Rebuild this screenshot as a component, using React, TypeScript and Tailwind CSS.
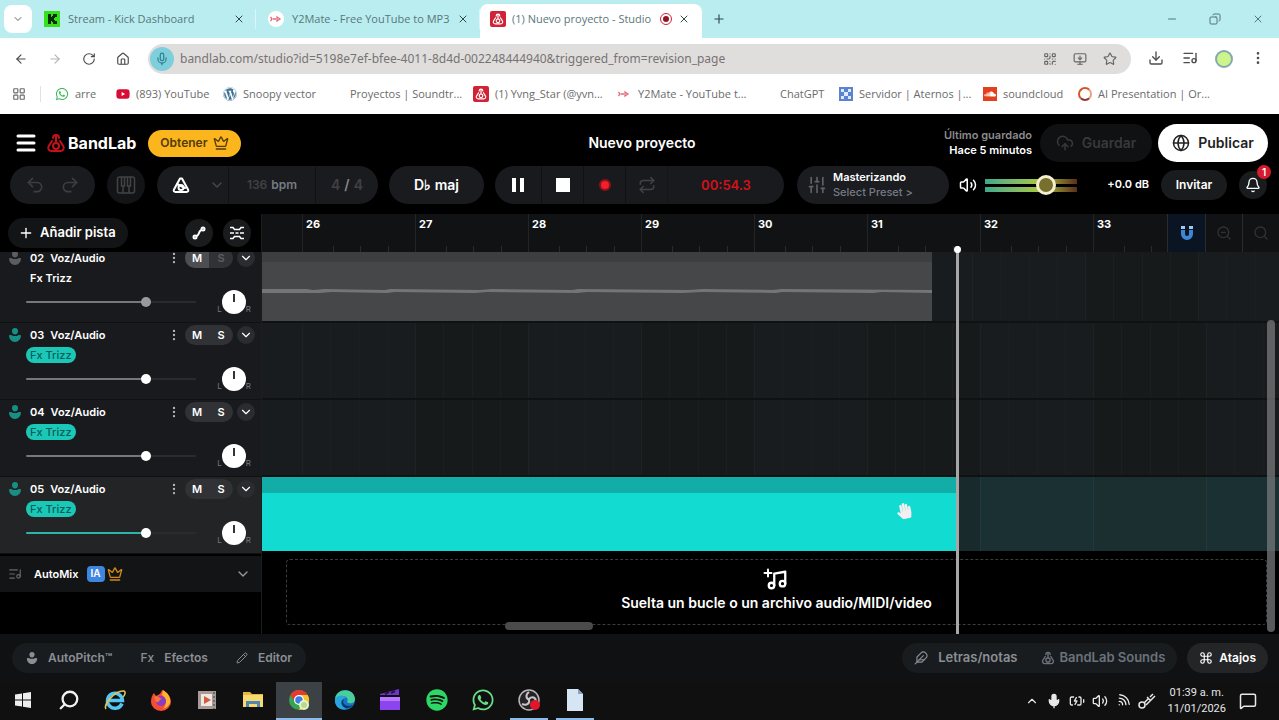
import { useState } from 'react';
import type { ReactNode } from 'react';
import {
  ArrowLeft,
  ArrowRight,
  BatteryCharging,
  Bell,
  ChevronDown,
  ChevronUp,
  CloudUpload,
  Command,
  Copy,
  Crown,
  Download,
  EllipsisVertical,
  Feather,
  Globe,
  House,
  LayoutGrid,
  ListMusic,
  Menu,
  MessageSquare,
  Mic,
  Minus,
  MonitorDown,
  Music,
  Pencil,
  Plus,
  QrCode,
  Redo2,
  Repeat,
  RotateCw,
  Search,
  SlidersVertical,
  Star,
  Undo2,
  Volume2,
  Wifi,
  X,
  ZoomOut,
} from 'lucide-react';
import { FaHandPaper, FaSoundcloud, FaSpotify, FaWhatsapp, FaWordpress, FaYoutube } from 'react-icons/fa';

interface Track {
  id: string;
  muted?: boolean;
  selected?: boolean;
}

const tracks: Track[] = [
  { id: '02', muted: true },
  { id: '03' },
  { id: '04' },
  { id: '05', selected: true },
];

const bars = [26, 27, 28, 29, 30, 31, 32, 33];

function BandLabMark({ className }: { className: string }) {
  return (
    <svg viewBox="0 0 20 20" className={className} fill="none" stroke="currentColor" strokeWidth="2">
      <path d="M6 8 2.500 13.500C1.500 16 3 18 5.500 18h9c2.500 0 4-2 3-4.500L14 8" strokeLinecap="round" />
      <circle cx="10" cy="13" r="3" />
      <path d="M10 10V3.500M7 5c0-4 6-4 6 0" strokeLinecap="round" />
    </svg>
  );
}

function KickIcon() {
  return (
    <svg viewBox="0 0 16 16" className="h-4 w-4 shrink-0">
      <rect width="16" height="16" fill="#35e01c" />
      <path d="M4 3h3v3h1V5h1V3h4v3h-2v1h-1v2h1v1h2v3H9v-2H8v-1H7v3H4z" fill="#082c06" />
    </svg>
  );
}

function Y2Icon() {
  return (
    <svg viewBox="0 0 16 16" className="h-4 w-4 shrink-0">
      <circle cx="8" cy="8" r="8" fill="#fff" />
      <path d="M2.500 6 4 8l-1.500 2M5 8h3M9 6l3 2-3 2z" stroke="#e36b7c" strokeWidth="1.300" fill="none" />
    </svg>
  );
}

function BandLabTile() {
  return (
    <span className="flex h-4 w-4 shrink-0 items-center justify-center rounded-xs bg-[#d12335] text-white">
      <BandLabMark className="h-3 w-3" />
    </span>
  );
}

interface TabProps {
  icon: ReactNode;
  title: string;
  active?: boolean;
}

function BrowserTab({ icon, title, active }: TabProps) {
  return (
    <div
      className={
        active
          ? 'mt-1 flex w-[222px] items-center gap-1.5 self-stretch rounded-t-lg bg-white pr-3 pb-1 pl-2.5'
          : 'flex h-5 w-[224px] items-center gap-2 border-r border-[#d9f6f8] pr-2.5 pl-3'
      }
    >
      {icon}
      <span className="flex-1 text-[11px] leading-4 whitespace-nowrap text-[#59777b]">{title}</span>
      {active && (
        <span className="flex h-3 w-3 shrink-0 items-center justify-center rounded-full border border-[#d12335]">
          <span className="h-1.5 w-1.5 rounded-full bg-[#8e1626]" />
        </span>
      )}
      <button aria-label={`Cerrar ${title}`} className="text-[#33484b]">
        <X className="h-3 w-3" />
      </button>
    </div>
  );
}

function Browser() {
  return (
    <header className="bg-white font-['Open_Sans',sans-serif]">
      <div className="flex h-[38px] items-center bg-[#b9edf0] pl-1">
        <button aria-label="Buscar pestañas" className="flex h-7 w-7 items-center justify-center rounded-lg bg-white text-[#5f6366]">
          <ChevronDown className="h-3 w-3" />
        </button>
        <BrowserTab icon={<KickIcon />} title="Stream - Kick Dashboard" />
        <BrowserTab icon={<Y2Icon />} title="Y2Mate - Free YouTube to MP3" />
        <BrowserTab icon={<BandLabTile />} title="(1) Nuevo proyecto - Studio" active />
        <button aria-label="Nueva pestaña" className="ml-2.5 text-[#33484b]">
          <Plus className="h-3.5 w-3.5" />
        </button>
        <div className="ml-auto flex text-[#53777a]">
          <button aria-label="Minimizar" className="flex w-[43px] justify-center"><Minus className="h-3 w-3" /></button>
          <button aria-label="Restaurar" className="flex w-[43px] justify-center"><Copy className="h-3 w-3 -scale-x-100" /></button>
          <button aria-label="Cerrar" className="flex w-[43px] justify-center"><X className="h-3 w-3" /></button>
        </div>
      </div>

      <div className="flex h-[42px] items-center pr-1 pl-1 text-[#4c4c4c]">
        <button aria-label="Atrás" className="flex w-[34px] justify-center"><ArrowLeft className="h-3.5 w-3.5" /></button>
        <button aria-label="Adelante" className="flex w-[34px] justify-center text-[#b5b5b5]"><ArrowRight className="h-3.5 w-3.5" /></button>
        <button aria-label="Recargar" className="flex w-[34px] justify-center"><RotateCw className="h-3.5 w-3.5" /></button>
        <button aria-label="Inicio" className="flex w-[34px] justify-center"><House className="h-3.5 w-3.5" /></button>
        <div className="ml-2 flex h-[30px] flex-1 items-center rounded-full bg-[#e0dddd] pr-3.5 pl-0.5 text-[#686565]">
          <span className="flex h-6 w-6 items-center justify-center rounded-full bg-[#7dcfdc] text-[#2f7d8c]">
            <Mic className="h-3.5 w-3.5" />
          </span>
          <input
            aria-label="Dirección"
            className="ml-1.5 min-w-0 flex-1 bg-transparent font-['Noto_Sans',sans-serif] text-xs text-[#777373] outline-none"
            defaultValue="bandlab.com/studio?id=5198e7ef-bfee-4011-8d4d-002248444940&triggered_from=revision_page"
          />
          <div className="flex gap-4">
            <QrCode className="h-3.5 w-3.5" />
            <MonitorDown className="h-3.5 w-3.5" />
            <Star className="h-3.5 w-3.5" />
          </div>
        </div>
        <div className="ml-2 flex">
          <button aria-label="Descargas" className="flex w-[34px] justify-center"><Download className="h-4 w-4" /></button>
          <button aria-label="Multimedia" className="flex w-[34px] justify-center"><ListMusic className="h-4 w-4" /></button>
          <button aria-label="Perfil" className="flex w-[34px] justify-center">
            <span className="h-[18px] w-[18px] rounded-full border-2 border-[#83a8b0] bg-[#cdf58c]" />
          </button>
          <button aria-label="Más" className="flex w-[34px] justify-center"><EllipsisVertical className="h-4 w-4" /></button>
        </div>
      </div>

      <nav className="flex h-[34px] items-center pb-1.5 pl-3 text-[11px] whitespace-nowrap text-[#6b6b6b]">
        <LayoutGrid className="h-3.5 w-3.5" />
        <span className="mr-3.5 ml-3.5 h-4 w-px bg-[#e2e2e2]" />
        <a href="#arre" className="flex w-[61px] items-center gap-1.5"><FaWhatsapp className="h-3.5 w-3.5 text-[#38b957]" />arre</a>
        <a href="#youtube" className="flex w-[107px] items-center gap-1.5"><FaYoutube className="h-3.5 w-3.5 text-[#d60b36]" />(893) YouTube</a>
        <a href="#snoopy" className="flex w-[107px] items-center gap-1.5"><FaWordpress className="h-3.5 w-3.5 text-[#3d7393]" />Snoopy vector</a>
        <a href="#proyectos" className="flex w-[143px] items-center pl-5">Proyectos | Soundtr...</a>
        <a href="#yvng" className="flex w-[143px] items-center gap-1.5"><BandLabTile />(1) Yvng_Star (@yvn...</a>
        <a href="#y2mate" className="flex w-[144px] items-center gap-1.5"><Y2Icon />Y2Mate - YouTube t...</a>
        <a href="#chatgpt" className="flex w-[79px] items-center pl-5">ChatGPT</a>
        <a href="#aternos" className="flex w-[144px] items-center gap-1.5">
          <svg viewBox="0 0 14 14" className="h-3.5 w-3.5 shrink-0">
            <rect width="14" height="14" fill="#5b83d3" />
            <path d="M2 2h3v3H2zM9 2h3v3H9zM5 5h4v4H5zM2 9h3v3H2zM9 9h3v3H9z" fill="#dfe9ff" />
          </svg>
          Servidor | Aternos |...
        </a>
        <a href="#soundcloud" className="flex w-[95px] items-center gap-1.5">
          <span className="flex h-3.5 w-3.5 items-center justify-center bg-[#e5401d] text-white"><FaSoundcloud className="h-3 w-3" /></span>
          soundcloud
        </a>
        <a href="#ai" className="flex items-center gap-1.5">
          <span className="h-3.5 w-3.5 rounded-full border-2 border-[#d8532c] border-r-[#e9a07c] border-b-[#8b3a34]" />
          AI Presentation | Or...
        </a>
      </nav>
    </header>
  );
}

function StudioHeader() {
  return (
    <div className="flex items-center justify-between pt-2.5 pr-[11px] pl-4">
      <div className="flex flex-1 items-center">
        <button aria-label="Menú"><Menu className="-ml-0.5 h-6 w-6" strokeWidth={3} /></button>
        <BandLabMark className="ml-2 h-5 w-5 text-[#c4111c]" />
        <span className="ml-0.5 text-base font-bold">BandLab</span>
        <button className="ml-3 flex h-[27px] items-center gap-1.5 rounded-full bg-[#fab61c] px-3 text-xs font-semibold text-[#553b08]">
          Obtener <Crown className="h-4 w-4" />
        </button>
      </div>
      <h1 className="text-sm font-semibold">Nuevo proyecto</h1>
      <div className="flex flex-1 items-center justify-end">
        <p className="mr-2 text-right text-[11px] leading-[15px] font-semibold">
          <span className="block text-[#8a8a8d]">Último guardado</span>
          Hace 5 minutos
        </p>
        <button disabled className="flex h-[38px] w-28 items-center justify-center gap-2 rounded-full bg-[#101112] text-sm font-semibold text-[#37393c]">
          <CloudUpload className="h-[18px] w-[18px]" /> Guardar
        </button>
        <button className="ml-1.5 flex h-[38px] w-[110px] items-center justify-center gap-2 rounded-full bg-white text-sm font-semibold text-[#222]">
          <Globe className="h-[18px] w-[18px]" /> Publicar
        </button>
      </div>
    </div>
  );
}

function MetronomeIcon() {
  return (
    <svg viewBox="0 0 20 20" className="h-5 w-5" fill="none" stroke="currentColor" strokeWidth="2" strokeLinejoin="round" strokeLinecap="round">
      <path d="M9 3.500h2l6 11c.8 1.500 0 2.500-1.500 2.500h-11C3 17 2.200 16 3 14.500z" />
      <circle cx="10" cy="12.500" r="2.500" />
      <path d="m6 9 8 4" />
    </svg>
  );
}

function Transport() {
  const [volume, setVolume] = useState(71);

  return (
    <div className="flex items-center pt-1 pr-3 pb-2.5 pl-2.5 text-sm font-semibold">
      <div className="flex h-[38px] w-[85px] items-center justify-around rounded-full bg-[#191b1e] px-2 text-[#3c3e42]">
        <button aria-label="Deshacer"><Undo2 className="h-5 w-5" /></button>
        <button aria-label="Rehacer"><Redo2 className="h-5 w-5" /></button>
      </div>
      <button aria-label="Teclado" className="ml-3 flex h-[38px] w-[38px] items-center justify-center rounded-full bg-[#131416] text-[#414347]">
        <svg viewBox="0 0 20 20" className="h-5 w-5" fill="none" stroke="currentColor" strokeWidth="1.500">
          <rect x="1.500" y="2" width="17" height="16" rx="2" />
          <path d="M7 11v7M13 11v7" />
          <path d="M5.500 2v9h3V2M11.500 2v9h3V2" />
        </svg>
      </button>
      <div className="ml-3 flex h-[38px] w-[221px] items-center rounded-full bg-[#1a1b1e]">
        <button aria-label="Metrónomo" className="flex w-12 justify-center"><MetronomeIcon /></button>
        <button aria-label="Opciones del metrónomo" className="flex w-[23px] justify-center text-[#46484c]"><ChevronDown className="h-4 w-4" /></button>
        <div className="flex h-full flex-1 items-center justify-center gap-1 border-x border-[#101113] text-xs text-[#3f4145]">
          136 <span className="text-[#777b84]">bpm</span>
        </div>
        <div className="flex w-[62px] items-center justify-center gap-1 text-[#3f4145]">
          4 <span className="text-[#85868a]">/</span> 4
        </div>
      </div>
      <button className="ml-[11px] h-[38px] w-[95px] rounded-full bg-[#191b1e]">D♭ maj</button>
      <div className="ml-[11px] flex h-[38px] w-[289px] items-center rounded-full bg-[#191a1d]">
        <button aria-label="Pausa" className="flex h-full w-[47px] items-center justify-center gap-1 border-r border-[#101113]">
          <span className="h-3.5 w-1 bg-white" />
          <span className="h-3.5 w-1 bg-white" />
        </button>
        <button aria-label="Detener" className="flex h-full w-[42px] items-center justify-center border-r border-[#101113]"><span className="h-3.5 w-3.5 bg-white" /></button>
        <button aria-label="Grabar" className="flex h-full w-[42px] items-center justify-center border-r border-[#101113]">
          <span className="h-3 w-3 rounded-full border-2 border-[#8e1119] bg-[#ef1f2b]" />
        </button>
        <button aria-label="Bucle" className="flex h-full w-[42px] items-center justify-center border-r border-[#141517] text-[#414347]"><Repeat className="h-[18px] w-[18px]" /></button>
        <span className="flex-1 text-center text-[13px] text-[#d4101b]">00:54.3</span>
      </div>
      <button className="ml-[13px] flex h-[38px] w-[152px] items-center gap-1.5 rounded-full bg-[#1b1c20] pl-2.5 text-left text-[11px] leading-[15px]">
        <SlidersVertical className="h-5 w-5 text-[#5e6066]" />
        <span>
          Masterizando
          <span className="block font-medium text-[#777a82]">Select Preset &gt;</span>
        </span>
      </button>
      <Volume2 className="ml-2.5 h-[18px] w-[18px]" />
      <div className="relative ml-2 flex w-[92px] flex-col gap-[3px]">
        <span className="h-[5px] bg-linear-to-r from-[#3aa98a] via-[#a9c736] via-60% to-[#59301a]" />
        <span className="h-[5px] bg-linear-to-r from-[#3aa98a] via-[#a9c736] via-60% to-[#59301a]" />
        <input
          type="range"
          aria-label="Volumen principal"
          value={volume}
          onChange={(e) => setVolume(Number(e.target.value))}
          className="absolute inset-0 m-auto h-5 w-full appearance-none bg-transparent [&::-webkit-slider-thumb]:h-5 [&::-webkit-slider-thumb]:w-5 [&::-webkit-slider-thumb]:appearance-none [&::-webkit-slider-thumb]:rounded-full [&::-webkit-slider-thumb]:border-[3px] [&::-webkit-slider-thumb]:border-[#f5efd0] [&::-webkit-slider-thumb]:bg-[#77702c]"
        />
      </div>
      <span className="ml-auto text-[11px]">+0.0 dB</span>
      <button className="ml-3 h-[30px] w-[66px] rounded-full bg-[#191b1d] text-xs">Invitar</button>
      <button aria-label="Notificaciones" className="relative ml-3 flex h-7 w-7 items-center justify-center rounded-full bg-[#191b1d]">
        <Bell className="h-4 w-4" />
        <span className="absolute -top-1.5 -right-1 flex h-3.5 w-3.5 items-center justify-center rounded-full bg-[#d51c2e] text-[10px]">1</span>
      </button>
    </div>
  );
}

function VoiceIcon({ className }: { className: string }) {
  return (
    <svg viewBox="0 0 14 14" className={className} fill="currentColor">
      <path d="M7 0c2 0 3 1.300 3 3S9 6.500 7 6.500 4 5 4 3s1-3 3-3z" />
      <path d="M1 7.500c1.500-.8 3-.5 4 .5h4c1-1 2.500-1.300 4-.5C13 11 10.500 14 7 14S1 11 1 7.500z" />
    </svg>
  );
}

function TrackRow({ track }: { track: Track }) {
  const [level, setLevel] = useState(72);
  const fill = track.selected ? '#2cb5a8' : '#77787a';

  return (
    <li
      className={`flex flex-col justify-end overflow-hidden border-b border-[#0f1011] ${track.selected ? 'bg-[#222426]' : 'bg-[#191a1d]'} ${track.muted ? 'h-[71px]' : 'h-[77px]'}`}
    >
      <div className="flex h-[76px] shrink-0 flex-col pr-1.5 pl-2">
        <div className="flex h-6 items-center text-[11px] font-semibold">
          <VoiceIcon className={track.muted ? 'h-3.5 w-3.5 text-[#5b5d60]' : 'h-3.5 w-3.5 text-[#178f84]'} />
          <span className="ml-2">{track.id}</span>
          <span className="ml-1.5">Voz/Audio</span>
          <button aria-label={`Opciones de la pista ${track.id}`} className="ml-auto text-[#b5b6b8]"><EllipsisVertical className="h-3.5 w-3.5" /></button>
          <div className="ml-1 flex h-5 w-12 overflow-hidden rounded-full bg-[#303235]">
            <button aria-label={`Silenciar pista ${track.id}`} className={track.muted ? 'flex-1 bg-[#4c4e51]' : 'flex-1'}>M</button>
            <button aria-label={`Solo pista ${track.id}`} className={track.muted ? 'flex-1 text-[#5c5e61]' : 'flex-1'}>S</button>
          </div>
          <button aria-label={`Expandir pista ${track.id}`} className="ml-1 flex h-[18px] w-[18px] items-center justify-center rounded-full bg-[#2a2c2f]">
            <ChevronDown className="h-3.5 w-3.5" />
          </button>
        </div>
        <button
          className={
            track.muted
              ? 'ml-[22px] h-4 self-start text-[11px] leading-4 font-semibold'
              : 'ml-[18px] h-4 self-start rounded-full bg-[#1bc8b8] px-1 text-[11px] leading-4 font-medium text-[#075e57]'
          }
        >
          Fx Trizz
        </button>
        <div className="mt-1 flex h-6 items-center">
          <input
            type="range"
            aria-label={`Volumen pista ${track.id}`}
            value={level}
            onChange={(e) => setLevel(Number(e.target.value))}
            style={{ backgroundImage: `linear-gradient(to right, ${fill} ${level}%, #292b2e ${level}%)` }}
            className={`ml-[18px] h-0.5 w-[170px] appearance-none rounded-full [&::-webkit-slider-thumb]:h-2.5 [&::-webkit-slider-thumb]:w-2.5 [&::-webkit-slider-thumb]:appearance-none [&::-webkit-slider-thumb]:rounded-full ${track.muted ? '[&::-webkit-slider-thumb]:bg-[#999a9c]' : '[&::-webkit-slider-thumb]:bg-white'}`}
          />
          <div className="mr-1 ml-auto flex items-end text-[8px] leading-[10px] text-[#77797c]">
            L
            <button aria-label={`Panorama pista ${track.id}`} className="flex h-6 w-6 justify-center rounded-full bg-white pt-1">
              <span className="h-2 w-0.5 bg-[#333]" />
            </button>
            R
          </div>
        </div>
      </div>
    </li>
  );
}

function TrackPanel() {
  return (
    <aside className="flex w-[262px] shrink-0 flex-col border-r border-[#1c1d1f]">
      <div className="flex h-[38px] items-center pr-2.5 pl-2">
        <button className="flex h-[30px] w-[120px] items-center gap-1.5 rounded-full bg-[#131415] pl-2.5 text-[13px] font-semibold whitespace-nowrap">
          <Plus className="h-4 w-4" /> Añadir pista
        </button>
        <button aria-label="Automatización" className="ml-auto flex h-7 w-7 items-center justify-center rounded-full bg-[#1a1b1d]">
          <svg viewBox="0 0 16 16" className="h-4 w-4" fill="none" stroke="currentColor" strokeWidth="2">
            <circle cx="4" cy="12" r="1.500" />
            <circle cx="12" cy="4" r="1.500" />
            <path d="M5 11c4 0 2-6 6-6" />
          </svg>
        </button>
        <button aria-label="Ajustar pistas" className="ml-2.5 flex h-7 w-7 items-center justify-center rounded-full bg-[#1a1b1d]">
          <svg viewBox="0 0 16 16" className="h-4 w-4" fill="none" stroke="currentColor" strokeWidth="1.500">
            <path d="M1 2.500h3l1.500 2h5l1.500-2h3M1 13.500h3l1.500-2h5l1.500 2h3M1 8h4M11 8h4M6.500 8h3" />
          </svg>
        </button>
      </div>
      <ul>
        {tracks.map((track) => (
          <TrackRow key={track.id} track={track} />
        ))}
      </ul>
      <div className="mt-0.5 flex h-[36px] items-center bg-[#131415] pr-2.5 pl-2 text-xs font-semibold">
        <ListMusic className="h-3.5 w-3.5 text-[#66686b]" />
        <span className="ml-3 text-[11px]">AutoMix</span>
        <span className="ml-2 flex h-4 w-[18px] items-center justify-center rounded-sm bg-[#3f86e0] text-[10px]">IA</span>
        <Crown className="ml-0.5 h-4 w-4 text-[#d18a15]" />
        <button aria-label="Expandir AutoMix" className="ml-auto text-[#98999b]"><ChevronDown className="h-4 w-4" /></button>
      </div>
    </aside>
  );
}

function Ruler() {
  return (
    <div className="flex h-[38px] bg-[#101214]">
      <div className="flex min-w-0 flex-1 overflow-hidden">
        <span className="w-10 shrink-0" />
        {bars.map((bar) => (
          <div key={bar} className="flex w-[113px] shrink-0 flex-col justify-between border-l border-[#222426] pt-[3px] pl-[3px]">
            <span className="text-[11px] leading-[14px] font-bold">{bar}</span>
            <span className="flex h-1.5 justify-evenly">
              <span className="w-px bg-[#282a2c]" />
              <span className="w-px bg-[#282a2c]" />
              <span className="w-px bg-[#282a2c]" />
            </span>
          </div>
        ))}
      </div>
      <button aria-label="Ajustar a la cuadrícula" className="flex w-[38px] items-center justify-center border-l border-[#292b2d] bg-[#0b1423] text-[#3d86d4]">
        <svg viewBox="0 0 16 16" className="h-4 w-4" fill="none" stroke="currentColor" strokeWidth="4">
          <path d="M4 5v4a4 4 0 0 0 8 0V5" />
          <path d="M4 1v3M12 1v3" stroke="#9cc8f2" />
        </svg>
      </button>
      <button aria-label="Alejar" className="flex w-[37px] items-center justify-center border-l border-[#292b2d] text-[#303235]"><ZoomOut className="h-4 w-4" /></button>
      <button aria-label="Acercar" className="flex w-[37px] items-center justify-center border-l border-[#292b2d] text-[#303235]"><Search className="h-4 w-4" /></button>
    </div>
  );
}

function Grid() {
  return (
    <div className="flex h-full min-w-0 flex-1 overflow-hidden bg-[#181b1c]">
      <span className="w-10 shrink-0 bg-[#191c1e]" />
      {[...bars, 34].map((bar) => (
        <div key={bar} className={bar % 2 ? 'flex w-[113px] shrink-0 justify-evenly border-l border-[#1f2224] bg-[#161a1a]' : 'flex w-[113px] shrink-0 justify-evenly border-l border-[#1f2224] bg-[#191c1e]'}>
          <span className="w-px bg-[#1c1f21]" />
          <span className="w-px bg-[#1c1f21]" />
          <span className="w-px bg-[#1c1f21]" />
        </div>
      ))}
    </div>
  );
}

function Timeline() {
  return (
    <section aria-label="Línea de tiempo" className="relative flex min-w-0 flex-1 flex-col">
      <Ruler />
      <div className="flex h-[71px] border-b-2 border-[#0f1112]">
        <div className="flex w-[670px] shrink-0 flex-col bg-[#464748]">
          <span className="h-2.5 bg-[#3d3e3f]" />
          <svg viewBox="0 0 670 58" preserveAspectRatio="none" className="h-[58px] w-full">
            <path d="M0 27h45l6 1 12-1 60 1 5-1 90 1 12-1 80 1 6-1 110 1 15-1 70 1 8-1 151 1v3l-50-1-9 1-91-1-6 1-74-1-20 1-95-1-10 1-90-1-12 1-80-1-8 1-55-1-13 1H0z" fill="#747576" />
          </svg>
        </div>
        <Grid />
      </div>
      <div className="flex h-[77px] border-b-2 border-[#0f1112]"><Grid /></div>
      <div className="flex h-[77px] border-b-2 border-[#0f1112]"><Grid /></div>
      <div className="flex h-[74px] bg-[#1a3032]">
        <div className="flex w-[696px] shrink-0 flex-col bg-[#12dcd2]">
          <span className="h-4 bg-[#12ada7]" />
        </div>
        <div className="flex flex-1 overflow-hidden">
          <span className="w-[23px] shrink-0 border-r border-[#20393b] bg-[#192a2d]" />
          <span className="w-[113px] shrink-0 border-r border-[#20393b]" />
          <span className="w-[113px] shrink-0 border-r border-[#20393b] bg-[#1b2f31]" />
        </div>
      </div>
      <div className="mt-2 mr-3 ml-6 flex h-[66px] flex-col items-center justify-center rounded-sm border border-dashed border-[#3e3b3b] text-sm font-semibold">
        <span className="relative">
          <Music className="h-[22px] w-[22px]" strokeWidth={2.5} />
          <Plus className="absolute -top-0.5 -left-1 h-3 w-3" strokeWidth={4} />
        </span>
        <p className="leading-6">Suelta un bucle o un archivo audio/MIDI/video</p>
      </div>
      <span className="absolute bottom-1 left-[243px] h-2 w-[88px] rounded-sm bg-[#4b4b4b]" />
      <span className="absolute top-8 bottom-0 left-[694px] w-[3px] bg-[#a7a7a7]" />
      <span className="absolute top-8 left-[692px] h-[7px] w-[7px] rounded-full bg-white" />
      <span className="absolute top-[106px] right-1 bottom-0.5 w-2 rounded-full bg-[#77787a]/75" />
      <FaHandPaper className="absolute top-[289px] left-[634px] h-4 w-4 -rotate-12 text-[#f4eef2]" />
    </section>
  );
}

function BottomBar() {
  return (
    <div className="flex h-12 items-center justify-between bg-[#0f1112] pr-[11px] pl-3 text-xs font-semibold text-[#8b8e94]">
      <div className="flex h-[30px] items-center gap-7 rounded-full bg-[#191c1f] px-3.5">
        <button className="flex items-center gap-2.5"><VoiceIcon className="h-3 w-3" />AutoPitch™</button>
        <button className="flex items-center gap-2.5"><span className="font-medium">Fx</span>Efectos</button>
        <button className="flex items-center gap-2.5"><Pencil className="h-3 w-3" />Editor</button>
      </div>
      <div className="flex items-center gap-2.5">
        <div className="flex h-[30px] items-center gap-6 rounded-full bg-[#191c1f] px-3 text-[13px]">
          <button className="flex items-center gap-2.5"><Feather className="h-3.5 w-3.5" />Letras/notas</button>
          <button className="flex items-center gap-1 text-[#6b727b]">
            <BandLabMark className="h-3.5 w-3.5" />BandLab Sounds
          </button>
        </div>
        <button className="flex h-[30px] items-center gap-1.5 rounded-full bg-[#232527] px-3 text-white">
          <Command className="h-3.5 w-3.5" />Atajos
        </button>
      </div>
    </div>
  );
}

const apps: { name: string; icon: ReactNode; running?: boolean; active?: boolean }[] = [
  {
    name: 'Inicio',
    icon: <svg viewBox="0 0 16 16" className="h-4 w-4" fill="#ededed"><path d="M0 2.500 7 1.500v6H0zM8 1.300 16 0v7.500H8zM0 8.500h7v6l-7-1zM8 8.500h8V16l-8-1.300z" /></svg>,
  },
  { name: 'Buscar', icon: <Search className="h-[22px] w-[22px] -scale-x-100 text-[#f1f1f1]" strokeWidth={2.5} /> },
  {
    name: 'Internet Explorer',
    icon: (
      <svg viewBox="0 0 24 24" className="h-6 w-6" fill="none">
        <path d="M19 15.500a7.500 7.500 0 1 1 .5-3H6" stroke="#53c6f5" strokeWidth="3.500" />
        <path d="M3 21C0 17 12 2 21 3c2 1 1 4-1 6" stroke="#e4c552" strokeWidth="1.500" />
      </svg>
    ),
  },
  {
    name: 'Firefox',
    icon: (
      <svg viewBox="0 0 24 24" className="h-6 w-6">
        <path d="M13 2c4 2 9 6 9 12a10 9 0 0 1-20 0c0-4 1-7 3-9l2 3c2-1 5-2 6-6z" fill="#f64b35" />
        <path d="M14 2c5 3 8 7 7 13-1 3-4 5-7 6 4-5 4-10-1-14z" fill="#fdb52e" />
        <circle cx="12" cy="13" r="5" fill="#8a3cc4" />
        <path d="M5 9c3-2 5 1 8 2-3 0-2 4-6 3z" fill="#fa7636" />
      </svg>
    ),
  },
  {
    name: 'Reproductor',
    icon: (
      <svg viewBox="0 0 20 20" className="h-5 w-5">
        <rect x="1" y="1" width="18" height="18" fill="#a89a96" />
        <path d="M17 2v17" stroke="#66707c" strokeDasharray="2 2" strokeWidth="2" />
        <rect x="4" y="4" width="11" height="12" fill="#f0e6e2" />
        <path d="m7 6 7 4-7 4z" fill="#d45b3c" />
      </svg>
    ),
  },
  {
    name: 'Explorador de archivos',
    icon: (
      <svg viewBox="0 0 22 20" className="h-5 w-[22px]">
        <path d="M1 2h7l2 2h11v13H1z" fill="#e3b742" />
        <path d="M1 5h20v12H1z" fill="#f7db70" />
        <path d="M4 17v-6h14v6h-3v-3H7v3z" fill="#5186b0" />
      </svg>
    ),
  },
  {
    name: 'Chrome',
    active: true,
    icon: (
      <svg viewBox="0 0 24 24" className="h-6 w-6">
        <circle cx="12" cy="12" r="10" fill="#35a552" />
        <path d="M3.300 7A10 10 0 0 1 20.700 7H12L8 14z" fill="#e23b32" />
        <path d="M20.700 7A10 10 0 0 1 12 22l4-9-4-6z" fill="#f6c42c" />
        <circle cx="12" cy="12" r="5" fill="#fff" />
        <circle cx="12" cy="12" r="3.800" fill="#3c7fe3" />
        <circle cx="17" cy="17" r="5" fill="#e8f2cc" />
        <circle cx="17" cy="17" r="3" fill="#b7d989" />
      </svg>
    ),
  },
  {
    name: 'Edge',
    icon: (
      <svg viewBox="0 0 24 24" className="h-6 w-6">
        <circle cx="12" cy="12" r="10" fill="#1673c5" />
        <path d="M2 11C3 0 21-1 22 11c0 5-6 5-8 3 3-5-5-9-12-3z" fill="#48cf9c" />
        <path d="M2 11c3-5 10-4 11-1-5 0-6 8 0 11C6 23 1 17 2 11z" fill="#28a6dc" />
        <path d="M11 11c-3 4 2 9 9 6-3 4-9 4-11 0-1-2-1-5 2-6z" fill="#0b3768" />
      </svg>
    ),
  },
  {
    name: 'Editor de video',
    icon: (
      <svg viewBox="0 0 22 22" className="h-[22px] w-[22px]">
        <path d="M0 5 19 0v6H0z" fill="#6f35c9" />
        <path d="m5 5 4-2M11 4l4-2" stroke="#27144e" strokeWidth="2" />
        <path d="M0 8h20v13H0z" fill="#8c44ee" />
        <path d="M0 8h20v4H0z" fill="#b679ff" />
      </svg>
    ),
  },
  { name: 'Spotify', icon: <FaSpotify className="h-[22px] w-[22px] text-[#2bd865]" /> },
  { name: 'WhatsApp', icon: <FaWhatsapp className="h-6 w-6 text-[#68df86]" /> },
  {
    name: 'OBS Studio',
    running: true,
    icon: (
      <svg viewBox="0 0 24 24" className="h-6 w-6">
        <circle cx="12" cy="12" r="10" fill="#252326" stroke="#b9b5b9" strokeWidth="1.500" />
        <path d="M12 4c-4 3-3 7 1 8M5 16c5 2 8-1 7-4M19 14c0-5-4-6-7-3" stroke="#c9c6c9" strokeWidth="2" fill="none" />
        <circle cx="18" cy="17" r="5" fill="#e2162a" />
      </svg>
    ),
  },
  {
    name: 'Bloc de notas',
    running: true,
    icon: (
      <svg viewBox="0 0 18 22" className="h-[22px] w-[18px]">
        <path d="M1 0h11l5 5v17H1z" fill="#d5e5f4" />
        <path d="M12 0v5h5z" fill="#87a4bf" />
      </svg>
    ),
  },
];

function appClass(running?: boolean, active?: boolean) {
  if (active) return 'flex w-[46px] items-center justify-center border-b-2 border-[#8cbdea] bg-[#3b4144]';
  if (running) return 'mx-1 flex w-[38px] items-center justify-center border-b-2 border-[#8cbdea]';
  return 'flex w-[46px] items-center justify-center border-b-2 border-transparent';
}

function Taskbar() {
  return (
    <footer className="flex h-[38px] items-stretch bg-[#101010]">
      {apps.map((app) => (
        <button key={app.name} aria-label={app.name} className={appClass(app.running, app.active)}>
          {app.icon}
        </button>
      ))}
      <div className="ml-auto flex items-center gap-[7px] pr-[22px] text-[#e8e8e8]">
        <ChevronUp className="h-3.5 w-3.5" />
        <Mic className="h-4 w-4" fill="currentColor" />
        <BatteryCharging className="h-4 w-4" />
        <Volume2 className="h-4 w-4" />
        <Wifi className="h-4 w-4 rotate-45" />
        <svg viewBox="0 0 18 18" className="h-[18px] w-[18px]" fill="none" stroke="currentColor" strokeWidth="1.500">
          <circle cx="4" cy="13" r="3" />
          <path d="m6 11 5-5M8 13l6-6M9 5l4 4M12 5l3-3M14 7l3-3" />
        </svg>
        <time className="ml-1 text-center font-['Roboto',sans-serif] text-[11px] leading-4">
          <span className="block">01:39 a. m.</span>
          11/01/2026
        </time>
        <button aria-label="Centro de notificaciones" className="ml-1.5"><MessageSquare className="h-[18px] w-[18px]" /></button>
      </div>
    </footer>
  );
}

export default function App() {
  return (
    <div className="flex min-h-screen flex-col bg-black font-['Inter',sans-serif] text-white">
      <Browser />
      <main className="flex flex-1 flex-col">
        <StudioHeader />
        <Transport />
        <div className="flex flex-1">
          <TrackPanel />
          <Timeline />
        </div>
        <BottomBar />
      </main>
      <Taskbar />
    </div>
  );
}
